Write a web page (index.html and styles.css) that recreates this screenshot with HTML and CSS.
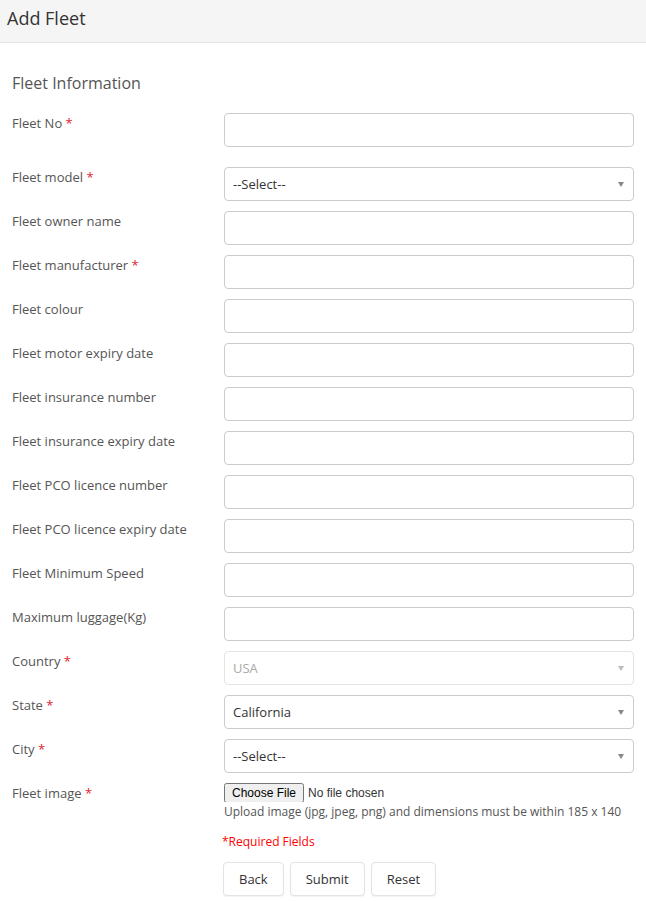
FILE: index.html
```html
<!DOCTYPE html>
<html lang="en">
<head>
  <meta charset="UTF-8" />
  <title>Add Fleet</title>
  <meta name="viewport" content="width=device-width, initial-scale=1.0"/>
  <link rel="stylesheet" href="styles.css">
</head>
<body>

  <div class="page-header">
    <h1>Add Fleet</h1>
  </div>

  <form class="fleet-form">
    <h3 class="section-title">Fleet Information</h3>

    <div class="form-row first">
      <label>Fleet No <span class="req">*</span></label>
      <div class="field"><input type="text"></div>
    </div>

    <div class="form-row">
      <label>Fleet model <span class="req">*</span></label>
      <div class="field select-wrap">
        <select><option>--Select--</option></select>
      </div>
    </div>

    <div class="form-row">
      <label>Fleet owner name</label>
      <div class="field"><input type="text"></div>
    </div>

    <div class="form-row">
      <label>Fleet manufacturer <span class="req">*</span></label>
      <div class="field"><input type="text"></div>
    </div>

    <div class="form-row">
      <label>Fleet colour</label>
      <div class="field"><input type="text"></div>
    </div>

    <div class="form-row">
      <label>Fleet motor expiry date</label>
      <div class="field"><input type="text"></div>
    </div>

    <div class="form-row">
      <label>Fleet insurance number</label>
      <div class="field"><input type="text"></div>
    </div>

    <div class="form-row">
      <label>Fleet insurance expiry date</label>
      <div class="field"><input type="text"></div>
    </div>

    <div class="form-row">
      <label>Fleet PCO licence number</label>
      <div class="field"><input type="text"></div>
    </div>

    <div class="form-row">
      <label>Fleet PCO licence expiry date</label>
      <div class="field"><input type="text"></div>
    </div>

    <div class="form-row">
      <label>Fleet Minimum Speed</label>
      <div class="field"><input type="text"></div>
    </div>

    <div class="form-row">
      <label>Maximum luggage(Kg)</label>
      <div class="field"><input type="text"></div>
    </div>

    <div class="form-row">
      <label>Country <span class="req">*</span></label>
      <div class="field select-wrap disabled">
        <select disabled><option>USA</option></select>
      </div>
    </div>

    <div class="form-row">
      <label>State <span class="req">*</span></label>
      <div class="field select-wrap">
        <select><option>California</option></select>
      </div>
    </div>

    <div class="form-row">
      <label>City <span class="req">*</span></label>
      <div class="field select-wrap">
        <select><option>--Select--</option></select>
      </div>
    </div>

    <div class="form-row">
      <label>Fleet image <span class="req">*</span></label>
      <div class="field">
        <input type="file" class="file-input">
        <p class="help-text">Upload image (jpg, jpeg, png) and dimensions must be within 185 x 140</p>
        <p class="required-note">*Required Fields</p>
        <div class="actions">
          <button type="button" class="btn">Back</button>
          <button type="submit" class="btn">Submit</button>
          <button type="reset" class="btn">Reset</button>
        </div>
      </div>
    </div>
  </form>

</body>
</html>
```

FILE: styles.css
```css
body {
  margin: 0;
  font-family: "Open Sans", Arial, sans-serif;
  font-size: 13px;
  color: #555;
  background-color: #fff;
}

.page-header {
  height: 42px;
  background-color: #f5f5f5;
  border-bottom: 1px solid #e3e3e3;
}

.page-header h1 {
  margin: 0;
  padding: 6px 7px 0;
  font-size: 18px;
  font-weight: normal;
  line-height: 24px;
  color: #333;
}

.fleet-form {
  padding: 0 12px;
}

.section-title {
  margin: 29px 0 19px;
  font-size: 16px;
  font-weight: normal;
  line-height: 22px;
  color: #555;
}

.form-row {
  display: flex;
  margin-bottom: 10px;
}

.form-row.first {
  margin-bottom: 20px;
}

.form-row label {
  flex: 0 0 212px;
  line-height: 20px;
}

.req {
  color: #e0242f;
}

.field {
  flex: 1;
}

input[type="text"],
select {
  display: block;
  box-sizing: border-box;
  width: 100%;
  height: 34px;
  padding: 0 8px;
  border: 1px solid #ccc;
  border-radius: 4px;
  background-color: #fff;
  font-family: "Open Sans", Arial, sans-serif;
  font-size: 13px;
  color: #333;
  outline: none;
}

select {
  appearance: none;
  -webkit-appearance: none;
}

.select-wrap {
  position: relative;
}

.select-wrap::after {
  content: "";
  position: absolute;
  right: 10px;
  top: 15px;
  border-left: 3.5px solid transparent;
  border-right: 3.5px solid transparent;
  border-top: 5px solid #888;
  pointer-events: none;
}

.select-wrap.disabled select {
  border-color: #e3e3e3;
  color: #aaa;
  opacity: 1;
}

.select-wrap.disabled::after {
  border-top-color: #bbb;
}

.file-input {
  display: block;
  height: 19px;
  font-family: Arial, sans-serif;
  font-size: 12px;
  color: #333;
}

.help-text {
  margin: 0;
  font-size: 12px;
  line-height: 20px;
  color: #555;
  white-space: nowrap;
}

.required-note {
  margin: 10px 0 10px -2px;
  font-size: 12px;
  line-height: 20px;
  color: #f00;
}

.actions {
  display: flex;
  gap: 6px;
  margin-left: -1px;
}

.btn {
  height: 34px;
  padding: 0 15px;
  border: 1px solid #e3e3e3;
  border-radius: 4px;
  background-color: #fff;
  box-shadow: 0 1px 1px rgba(0, 0, 0, 0.05);
  font-family: "Open Sans", Arial, sans-serif;
  font-size: 13px;
  color: #333;
  cursor: pointer;
}
```
